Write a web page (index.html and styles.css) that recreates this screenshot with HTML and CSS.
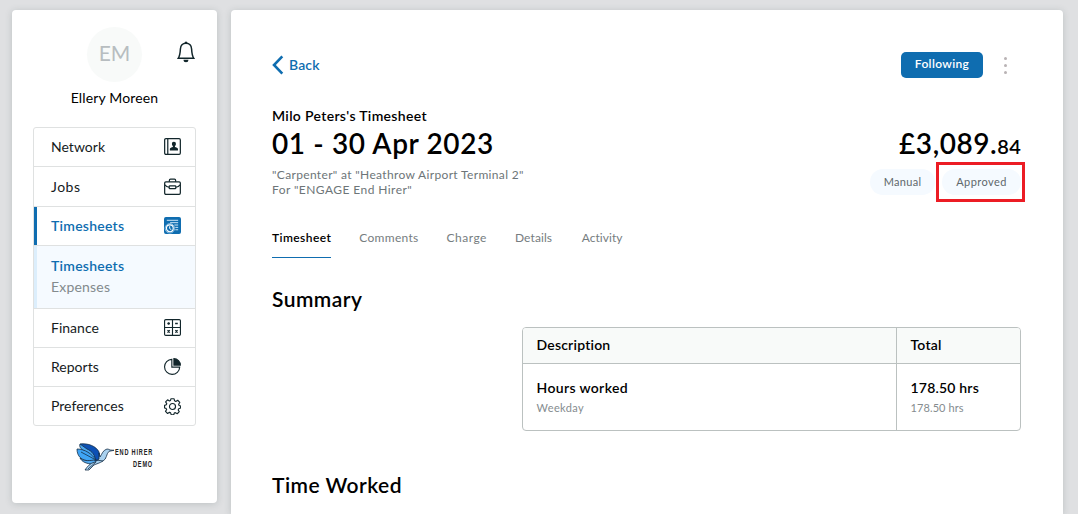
FILE: index.html
```html
<!DOCTYPE html>
<html lang="en">
<head>
<meta charset="utf-8">
<title>Timesheet</title>
<link rel="stylesheet" href="styles.css">
</head>
<body>
<div class="layout">
  <aside class="sidebar">
    <div class="profile">
      <div class="avatar">EM</div>
      <svg class="bell" viewBox="0 0 18 22" fill="none" stroke="#12262b" stroke-width="1.5">
        <path d="M9 2.200C5.600 2.200 3.600 4.500 3.400 8C3.200 12 2.900 14.800 1.200 17.300H16.800C15.100 14.800 14.800 12 14.600 8C14.400 4.500 12.400 2.200 9 2.200Z"/>
        <path d="M7.500 2.100a1.500 1.500 0 0 1 3 0zM6.500 18.800h5a2.500 2.500 0 0 1-5 0z" fill="#12262b" stroke="none"/>
      </svg>
    </div>
    <div class="username">Ellery Moreen</div>
    <nav class="menu">
      <a class="item"><span>Network</span>
        <svg class="icon" viewBox="0 0 18 18" fill="none" stroke="#12262b" stroke-width="1.300"><rect x=".7" y=".7" width="16.600" height="16.600" rx="1.300"/><path d="M4 1v16"/><path stroke="none" fill="#12262b" d="M10.500 4c1.500 0 2.100 1 2.100 2.300c0 1.100-.5 1.700-1 2.200v.9c1.300.5 3.200.8 3.200 2.200V13.300H6.200v-1.700c0-1.400 1.900-1.700 3.200-2.200v-.9c-.5-.5-1-1.100-1-2.200C8.400 5 9 4 10.500 4z"/></svg></a>
      <a class="item tall"><span class="jobs">Jobs</span>
        <svg class="icon" viewBox="0 0 18 18" fill="none" stroke="#12262b" stroke-width="1.300"><rect x=".7" y="4" width="16.600" height="13.300" rx="1.300"/><path d="M5.700 4V2.300a1.200 1.200 0 0 1 1.200-1.200h4.200a1.200 1.200 0 0 1 1.200 1.200V4M1 7.300c1.200 1.800 2.500 2.300 4.500 2.500M17 7.300c-1.200 1.800-2.500 2.300-4.500 2.500"/><rect x="5.500" y="8.300" width="7" height="3" rx=".8"/></svg></a>
      <a class="item active"><span>Timesheets</span>
        <svg class="icon" viewBox="0 0 18 18"><rect width="18" height="18" rx="2" fill="#0f6db0"/><g fill="none" stroke="#d6eafa"><path d="M3 3.500h12M6.500 6h8.500M11 8.500h4M12 11h3M12 13.500h3"/><circle cx="6.200" cy="12" r="5" stroke="#8fc2e8"/><circle cx="6.200" cy="12" r="3.600" fill="#0f6db0" stroke="#fff" stroke-width="1.200"/><path d="M6 9.800v2.400l1.800 1.300" stroke="#fff"/></g></svg></a>
      <div class="submenu"><a class="current">Timesheets</a><a>Expenses</a></div>
      <a class="item"><span>Finance</span>
        <svg class="icon" viewBox="0 0 18 18" fill="none" stroke="#12262b" stroke-width="1.200"><rect x=".6" y=".6" width="16.800" height="16.800" rx="1.300"/><path d="M9 1v16M1 9h16"/><path stroke-width="1.400" d="M3.500 4.800h2.800M4.900 3.400v2.800M11.800 4.800h2.800M3.700 12l2.400 2.400M6.100 12l-2.400 2.400M12 12l2.400 2.400M14.400 12l-2.400 2.400"/></svg></a>
      <a class="item"><span>Reports</span>
        <svg class="icon" viewBox="0 0 18 18" fill="none" stroke="#12262b" stroke-width="1.200"><path d="M8.300 1.400A8 8 0 1 0 16.600 9.700H8.300z"/><path d="M10.500 .7V7.500H17.300A6.800 6.800 0 0 0 10.500 .7z" fill="#12262b"/></svg></a>
      <a class="item"><span class="prefs">Preferences</span>
        <svg class="icon" viewBox="0 0 18 18" fill="none" stroke="#12262b" stroke-width="1.200" stroke-linejoin="round"><circle cx="9" cy="9" r="3.200"/><path d="M7.300 .8h3.400l.5 2.200 1.300.6 2-1.200 2.200 2.300-1.200 2 .5 1.200 1.600.5v2.200l-2 .7-.6 1.300 1.200 1.900-2.200 2.200-2-1.200-1.200.5-.5 1.800H7.700L7 15.700l-1.200-.5-2 1.200-2.200-2.200 1.200-2-.6-1.200L.6 10.500V7.800l1.800-.6.5-1.200-1.200-1.900 2.100-2.200 2 1.200 1.100-.5z"/></svg></a>
    </nav>
    <div class="brand">
      <svg class="bird" viewBox="0 0 38 28" stroke="#142d46" stroke-width=".8" stroke-linejoin="round">
        <path fill="#0c50b4" d="M4 1C12 0 20 3 23 9L24 15L20 19L12 10z"/>
        <path fill="#4ba6ee" d="M4 1C3 4 5 6 8 8L19 18C20 13 16 8 11 6z"/>
        <path fill="#3fa4f5" d="M1 6C1 13 5 18 15 18L20 17C16 11 9 6 1 6z"/>
        <path fill="#52aaf0" d="M4 15C7 18 12 18 18 17L22 19L17 21C11 21 6 19 4 15z"/>
        <path fill="#a9d1ef" d="M23 10L24 14C26 11 27 7 31 6Q33 6.200 34 7L38 7.300L33 8.300C30 11 31 16 27 18C24 20 20 21 18 22L13 27H9C11 24 14 20 19 19L23 16z"/>
        <path fill="none" d="M5 9L20 17L27 18M12 26L20 19"/>
      </svg>
      <div class="brandtext"><span>END HIRER</span><span>DEMO</span></div>
    </div>
  </aside>
  <main class="page">
    <div class="topbar">
      <a class="back"><svg viewBox="0 0 12 20" fill="none" stroke="#0f6db0" stroke-width="2.600"><path d="M10.300 1.300L2 10l8.300 8.700"/></svg><span>Back</span></a>
      <div class="actions"><button class="follow">Following</button><span class="dots"><i></i><i></i><i></i></span></div>
    </div>
    <header class="heading">
      <div>
        <div class="owner">Milo Peters's Timesheet</div>
        <h1>01 - 30 Apr 2023</h1>
        <div class="job"><div>"Carpenter" at "Heathrow Airport Terminal 2"</div><div class="hirer">For "ENGAGE End Hirer"</div></div>
      </div>
      <div class="totals">
        <div class="amount">£3,089.<small>84</small></div>
        <div class="pills"><span class="pill manual">Manual</span><span class="pill approved">Approved<b class="marker"></b></span></div>
      </div>
    </header>
    <div class="tabs"><a class="on">Timesheet</a><a>Comments</a><a class="charge">Charge</a><a class="tight">Details</a><a class="last">Activity</a></div>
    <h2 class="sum">Summary</h2>
    <div class="table">
      <div class="cell head">Description</div><div class="cell head">Total</div>
      <div class="cell"><div class="main">Hours worked</div><div class="sub">Weekday</div></div>
      <div class="cell"><div class="main number">178.50 hrs</div><div class="sub number">178.50 hrs</div></div>
    </div>
    <h2 class="worked">Time Worked</h2>
  </main>
</div>
</body>
</html>
```
FILE: styles.css
```css
* { box-sizing: border-box; }
body { margin: 0; height: 514px; overflow: hidden; background: #dfe0e2; font-family: Lato, "Liberation Sans", sans-serif; font-size: 14px; color: #000; }
.layout { display: flex; gap: 14px; align-items: flex-start; padding: 10px 15px 0 12px; }
.sidebar, .page { background: #fff; border-radius: 4px; box-shadow: 0 1px 7px rgba(70, 85, 85, .22); }
.sidebar { width: 205px; height: 493px; padding: 17px 21px 0; }
.page { width: 832px; height: 504px; padding: 42px 42px 0 41px; border-radius: 4px 4px 0 0; }

.profile { display: grid; grid-template-columns: 54px 55px 1fr; }
.avatar { grid-column: 2; width: 55px; height: 55px; border-radius: 50%; background: #f8faf9; color: #b7bdc0; font-size: 21px; line-height: 51px; text-align: center; }
.bell { width: 18px; height: 22px; margin: 14px 0 0 34.5px; }
.username { text-align: center; line-height: 18px; margin-top: 7px; letter-spacing: .15px; }
.menu { margin-top: 20px; border: 1px solid #dfe1e1; border-radius: 3px; height: 299px; color: #161b1d; }
.item { display: flex; justify-content: space-between; align-items: center; height: 39px; padding: 0 14px 0 17px; border-bottom: 1px solid #dfe1e1; }
.item span { padding-bottom: 2px; letter-spacing: .02px; }
.item .jobs { padding-bottom: 1px; letter-spacing: .5px; }
.item.tall { height: 40px; }
.item:last-child { border: 0; }
.icon { width: 17px; height: 17px; display: block; }
.item .icon { margin-bottom: 1px; }
.active { box-shadow: inset 3px 0 #0f6db0; }
.active, .current { color: #0f6db0; font-weight: 600; }
.item.active span, .current { letter-spacing: .25px; }
.submenu { height: 63px; background: #f5faff; border-bottom: 1px solid #dfe1e1; box-shadow: inset 3px 0 #dceefc; padding: 9px 0 0 17px; display: flex; flex-direction: column; line-height: 21px; color: #838a8d; letter-spacing: .2px; }
.brand { display: flex; margin: 17px 0 0 43px; }
.bird { width: 38px; height: 28px; }
.brandtext { display: flex; flex-direction: column; align-items: flex-end; width: 39px; font: bold 9px/12px "Liberation Sans", sans-serif; white-space: nowrap; transform: scaleX(.62); transform-origin: right; padding-top: 3px; letter-spacing: 1.3px; color: #222; }

.topbar { display: flex; justify-content: space-between; height: 26px; }
.back { display: flex; align-items: center; gap: 5px; color: #0f6db0; font-weight: 600; letter-spacing: .15px; }
.back span { padding-bottom: 1px; }
.back svg { width: 12px; height: 20px; }
.actions { display: flex; align-items: center; }
.follow { width: 82px; height: 26px; border: 0; border-radius: 5px; background: #0f6db0; color: #fff; font: 600 12px/22px Lato, sans-serif; letter-spacing: .35px; padding: 0 0 2px; }
.dots { display: flex; flex-direction: column; gap: 4px; margin: 1px 14px 0 21px; }
.dots i { width: 3px; height: 3px; border-radius: 50%; background: #b9b3b5; }
.heading { display: flex; justify-content: space-between; margin-top: 29px; height: 98px; }
.owner { font-weight: 600; line-height: 18px; letter-spacing: .33px; }
h1 { margin: 0; font-size: 28px; line-height: 36px; font-weight: 600; letter-spacing: .62px; }
.job { margin-top: 6px; font-size: 12px; line-height: 15px; color: #6d7578; letter-spacing: .34px; }
.hirer { letter-spacing: .43px; }
.totals { display: flex; flex-direction: column; align-items: flex-end; }
.amount { margin-top: 18px; font-size: 28px; line-height: 36px; font-weight: 600; letter-spacing: .55px; margin-right: -.5px; }
.amount small { font-size: 20px; }
.pills { display: flex; gap: 7px; margin-top: 5px; }
.pill { position: relative; height: 26px; border-radius: 13px; background: #f5faff; color: #60686b; font-size: 11px; line-height: 25px; text-align: center; letter-spacing: .3px; }
.manual { width: 65px; }
.approved { width: 79px; letter-spacing: .45px; }
.marker { position: absolute; left: -6px; top: -7px; width: 89px; height: 40px; border: 3px solid #ec1c24; }
.tabs { display: flex; gap: 28px; margin-top: 24px; height: 29px; font-size: 12px; line-height: 18px; color: #767d80; letter-spacing: .3px; }
.tabs .on { color: #000; font-weight: 600; border-bottom: 1px solid #0f6db0; letter-spacing: .42px; }
.tabs .charge { letter-spacing: .5px; }
.tabs .tight { letter-spacing: .1px; margin-right: 1.5px; }
.tabs .last { letter-spacing: .05px; }
h2 { margin: 0; font-size: 21px; line-height: 26px; font-weight: 600; letter-spacing: .45px; }
.sum { margin-top: 28px; }
.table { display: grid; grid-template-columns: 374px 1fr; grid-template-rows: 36px 66px; width: 499px; height: 104px; margin: 15px 0 0 auto; border: 1px solid #bbc1c0; border-radius: 4px; overflow: hidden; }
.cell { padding: 15px 0 0 13.5px; }
.cell:nth-child(odd) { border-right: 1px solid #bbc1c0; }
.head { padding-top: 0; background: #f8faf9; border-bottom: 1px solid #bbc1c0; font-weight: 600; line-height: 34px; letter-spacing: .2px; }
.main { font-weight: 600; line-height: 18px; letter-spacing: .35px; }
.sub { font-size: 11px; line-height: 16px; margin-top: 3px; color: #858c8f; letter-spacing: .4px; }
.main.number { letter-spacing: .2px; }
.sub.number { letter-spacing: .1px; }
.worked { margin-top: 41px; }
```
